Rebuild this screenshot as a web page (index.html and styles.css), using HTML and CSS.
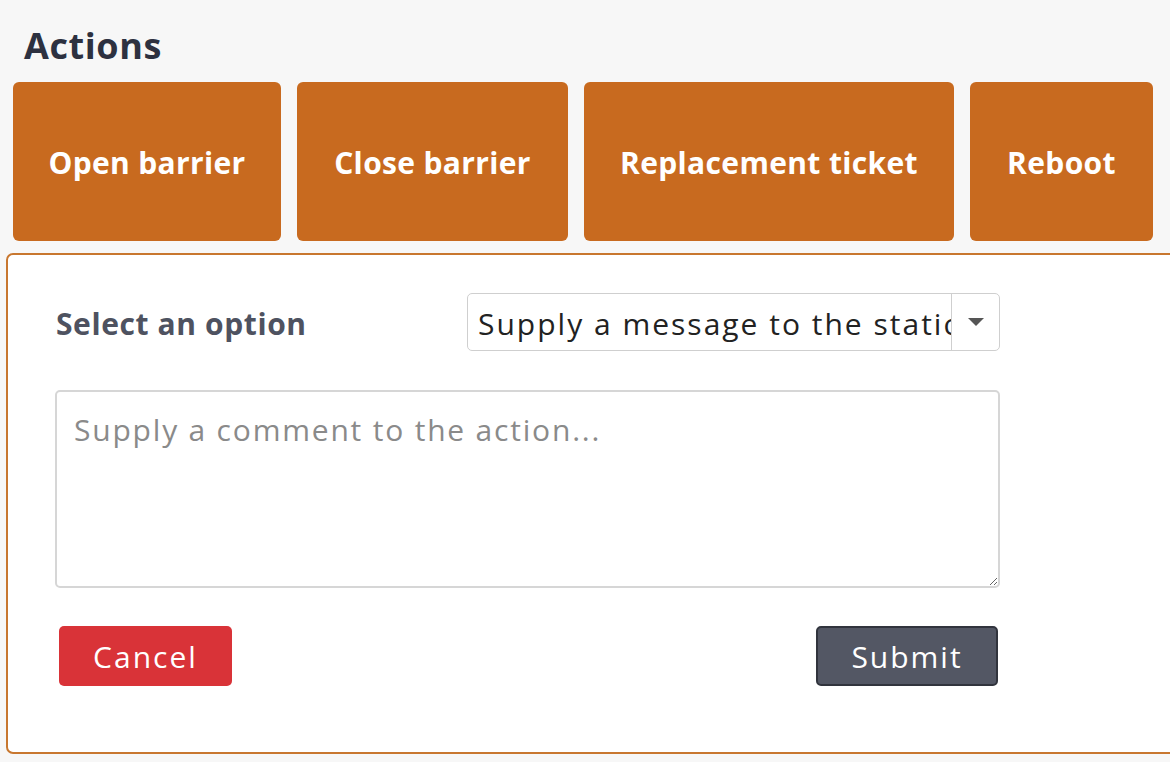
FILE: index.html
```html
<!DOCTYPE html>
<html>
<head>
<meta charset="utf-8">
<link rel="stylesheet" href="styles.css">
</head>
<body>
<div class="page">
  <h2 class="title">Actions</h2>
  <div class="actions">
    <button class="action w1">Open barrier</button>
    <button class="action w2">Close barrier</button>
    <button class="action w3">Replacement ticket</button>
    <button class="action w4">Reboot</button>
  </div>
  <div class="panel">
    <div class="form">
      <div class="row">
        <label class="label">Select an option</label>
        <div class="select">
          <div class="select-text">Supply a message to the station</div>
          <div class="select-arrow"><span class="tri"></span></div>
        </div>
      </div>
      <textarea class="comment" placeholder="Supply a comment to the action..."></textarea>
      <div class="buttons">
        <button class="btn cancel">Cancel</button>
        <button class="btn submit">Submit</button>
      </div>
    </div>
  </div>
</div>
</body>
</html>
```

FILE: styles.css
```css
html, body {
  margin: 0;
  padding: 0;
  background: #f7f7f7;
  overflow: hidden;
}
body {
  font-family: "Open Sans", Lato, sans-serif;
}
.page {
  padding-left: 6px;
}
.title {
  margin: 0;
  padding: 22px 0 0 18px;
  font-size: 36px;
  line-height: 48px;
  letter-spacing: 0.6px;
  font-weight: 700;
  color: #2d3140;
}
.actions {
  display: flex;
  gap: 16px;
  margin: 12px 0 0 7px;
}
.action {
  height: 159px;
  border: none;
  border-radius: 6px;
  background: #c86a1f;
  color: #fff;
  font-family: inherit;
  font-size: 30px;
  letter-spacing: 0.35px;
  font-weight: 700;
  padding: 2px 0 0;
}
.w1 { width: 268px; }
.w2 { width: 271px; }
.w3 { width: 370px; }
.w4 { width: 183px; }
.panel {
  margin: 12px -30px 0 0;
  height: 497px;
  border: 2px solid #c8772f;
  border-radius: 7px;
  background: #fff;
}
.form {
  width: 945px;
  padding: 38px 0 0 47px;
}
.row {
  display: flex;
  align-items: center;
  justify-content: space-between;
  padding-left: 1px;
}
.label {
  font-size: 30px;
  letter-spacing: 0.6px;
  font-weight: 700;
  color: #4e5260;
  padding-top: 2px;
}
.select {
  width: 531px;
  height: 56px;
  border: 1px solid #cfcfcf;
  border-radius: 5px;
  display: flex;
  background: #fff;
}
.select-text {
  flex: 1;
  overflow: hidden;
  white-space: nowrap;
  font-size: 30px;
  letter-spacing: 2px;
  line-height: 56px;
  color: #222;
  padding: 2px 0 0 10px;
}
.select-arrow {
  width: 47px;
  border-left: 1px solid #cfcfcf;
  display: flex;
  align-items: center;
  justify-content: center;
}
.tri {
  width: 0;
  height: 0;
  border-left: 8px solid transparent;
  border-right: 8px solid transparent;
  border-top: 8px solid #555;
}
.comment {
  display: block;
  box-sizing: border-box;
  width: 945px;
  height: 198px;
  margin-top: 39px;
  border: 2px solid #d6d6d6;
  border-radius: 5px;
  padding: 16px 17px;
  font-family: inherit;
  font-size: 30px;
  letter-spacing: 1.8px;
  line-height: 44px;
  color: #222;
  background: #fff;
}
.comment::placeholder {
  color: #8a8a8a;
}
.buttons {
  display: flex;
  justify-content: space-between;
  margin-top: 38px;
  padding: 0 2px 0 4px;
}
.btn {
  height: 60px;
  border-radius: 5px;
  font-family: inherit;
  font-size: 30px;
  letter-spacing: 2px;
  color: #fff;
  padding: 0;
}
.cancel {
  width: 173px;
  background: #d93338;
  border: none;
}
.submit {
  width: 182px;
  background: #535764;
  border: 2px solid #31343d;
}
```
